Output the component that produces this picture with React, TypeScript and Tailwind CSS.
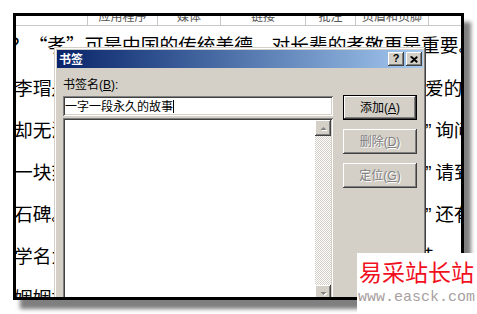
const raised =
  "shadow-[inset_-1px_-1px_#404040,inset_1px_1px_#ffffff,inset_-2px_-2px_#808080,inset_2px_2px_#d4d0c8]";
const sunken =
  "shadow-[inset_1px_1px_#808080,inset_-1px_-1px_#ffffff,inset_2px_2px_#404040,inset_-2px_-2px_#d4d0c8]";

const uiFont = "font-['Liberation_Sans','Noto_Sans_CJK_SC',sans-serif]";

function Ribbon() {
  const cells = [
    { w: "w-[70px]", label: "应用程序" },
    { w: "w-[63px]", label: "媒体" },
    { w: "w-[85px]", label: "链接" },
    { w: "w-[50px]", label: "批注" },
    { w: "w-[73px]", label: "页眉和页脚" },
  ];
  return (
    <div className="h-[10px] border-b border-[#c8c8c8] flex overflow-hidden font-['Noto_Sans_CJK_SC',sans-serif] text-[12px] text-[#555]">
      <div className="w-[71px] shrink-0" />
      {cells.map((c) => (
        <div key={c.label} className={`${c.w} shrink-0 border-l border-[#c8c8c8] flex justify-center`}>
          <span className="leading-[14px] mt-[-7px]">{c.label}</span>
        </div>
      ))}
      <div className="flex-1 border-l border-[#c8c8c8]" />
    </div>
  );
}

function Quote() {
  return <span className="inline-block w-[10px] font-['Liberation_Sans',sans-serif]">”</span>;
}

function DocumentText() {
  return (
    <div className="font-['Noto_Sans_CJK_SC',sans-serif] text-[18.7px] text-black whitespace-nowrap">
      <div className="h-[40px] leading-[36px] ml-[-6px]">？“孝”可是中国的传统美德，对长辈的孝敬更是重要。</div>
      <div className="h-[42px] leading-[42px] ml-[-2px]">李瑁是唐玄宗的第十八个儿子，他自幼深受父亲宠爱的</div>
      <div className="h-[42px] leading-[42px] ml-[-2px]">
        却无法在父亲面前尽孝，于是他便向大臣们“请教<Quote />询问
      </div>
      <div className="h-[42px] leading-[42px] ml-[-2px]">
        一块刻着碑文的石头，被后人们称为“孝子之碑文<Quote />请到
      </div>
      <div className="h-[42px] leading-[42px] ml-[-2px]">
        石碑。后来人们把这块石碑称为“李瑁孝心纪念碑<Quote />还有
      </div>
      <div className="h-[42px] leading-[42px] ml-[-2px]">学名为“孝碑”，至今仍立在那里供人们凭吊，往昔一</div>
      <div className="h-[42px] leading-[42px] ml-[-2px]">姻姻相传的故事一直流传到了今天。</div>
    </div>
  );
}

function Arrow({ up }: { up?: boolean }) {
  return (
    <svg width="9" height="6" viewBox="0 0 9 6" className="block">
      <polygon points={up ? "1.5,5 7.5,5 4.5,2" : "1.5,2 7.5,2 4.5,5"} fill="#ffffff" transform="translate(1,1)" />
      <polygon points={up ? "1.5,5 7.5,5 4.5,2" : "1.5,2 7.5,2 4.5,5"} fill="#808080" />
    </svg>
  );
}

function BookmarkDialog() {
  return (
    <div
      className={`absolute left-[38px] top-[31px] w-[372px] h-[270px] bg-[#d4d0c8] p-[3px] ${uiFont} shadow-[inset_-1px_-1px_#404040,inset_1px_1px_#d4d0c8,inset_-2px_-2px_#808080,inset_2px_2px_#ffffff]`}
    >
      {/* title bar */}
      <div className="h-[18px] flex items-center justify-between pl-[2px] pr-[1px] bg-gradient-to-r from-[#0a246a] to-[#a6caf0]">
        <span className="text-white font-bold text-[12px] leading-none font-['Noto_Sans_CJK_SC',sans-serif]">书签</span>
        <div className="flex gap-[2px]">
          <div className={`w-[16px] h-[14px] bg-[#d4d0c8] ${raised} flex items-center justify-center text-[11px] font-bold leading-none text-black pb-[1px]`}>
            ?
          </div>
          <div className={`w-[16px] h-[14px] bg-[#d4d0c8] ${raised} flex items-center justify-center`}>
            <svg width="8" height="7" viewBox="0 0 8 7">
              <path d="M0.5 0.5 L7 6.5 M1.5 0.5 L7.5 6 M7 0.5 L0.5 6.5 M7.5 1 L1.5 6.5" stroke="#000" strokeWidth="1.2" />
            </svg>
          </div>
        </div>
      </div>

      {/* body */}
      <div className="flex gap-[10px] px-[6px] pt-[10px]">
        <div className="w-[270px] flex flex-col">
          <div className="text-[12px] leading-[14px] text-black">
            书签名(<span className="underline">B</span>):
          </div>
          <div className={`mt-[4px] h-[20px] bg-white ${sunken} pl-[2px] flex items-center font-['Noto_Sans_CJK_SC',sans-serif] text-[12px] text-black`}>
            <span className="leading-none">一字一段永久的故事</span>
            <span className="inline-block w-px h-[13px] bg-black" />
          </div>
          <div className={`mt-[2px] h-[185px] bg-white ${sunken} p-[2px] flex justify-end`}>
            <div className="w-[16px] h-full flex flex-col">
              <div className={`h-[16px] bg-[#d4d0c8] ${raised} flex items-center justify-center`}>
                <Arrow up />
              </div>
              <div className="flex-1 bg-[repeating-conic-gradient(#d4d0c8_0_25%,#ffffff_0_50%)] bg-[length:2px_2px]" />
              <div className={`h-[16px] bg-[#d4d0c8] ${raised} flex items-center justify-center`}>
                <Arrow />
              </div>
            </div>
          </div>
        </div>

        <div className="w-[74px] flex flex-col gap-[9px] pt-[17px] text-[12px]">
          <div className="h-[25px] border border-black">
            <div className={`h-full bg-[#d4d0c8] ${raised} flex items-center justify-center text-black`}>
              添加(<span className="underline">A</span>)
            </div>
          </div>
          <div className={`h-[25px] bg-[#d4d0c8] ${raised} flex items-center justify-center text-[#808080] [text-shadow:1px_1px_0_#ffffff]`}>
            删除(<span className="underline">D</span>)
          </div>
          <div className={`h-[25px] bg-[#d4d0c8] ${raised} flex items-center justify-center text-[#808080] [text-shadow:1px_1px_0_#ffffff]`}>
            定位(<span className="underline">G</span>)
          </div>
        </div>
      </div>
    </div>
  );
}

export default function App() {
  return (
    <div className="relative w-[477px] h-[314px] bg-white overflow-hidden pt-[13px] pl-[13px]">
      <div className="relative w-[451px] h-[287px] border-[3px] border-black bg-white overflow-hidden shadow-[7px_9px_4px_rgba(0,0,0,0.5)]">
        <Ribbon />
        <DocumentText />
        <BookmarkDialog />
      </div>

      {/* watermark */}
      <div className="absolute left-[357px] top-[253px] w-[120px] h-[61px] bg-white pt-[7px] pl-[2px]">
        <div className="font-['Noto_Sans_CJK_SC',sans-serif] text-[23px] leading-[23px] text-[#f0101e] whitespace-nowrap">
          易采站长站
        </div>
        <div className="mt-[7px] ml-[-1px] font-['Liberation_Mono',monospace] text-[15px] leading-[16px] text-[#a8a0a0] whitespace-nowrap">
          www.easck.com
        </div>
      </div>
    </div>
  );
}
